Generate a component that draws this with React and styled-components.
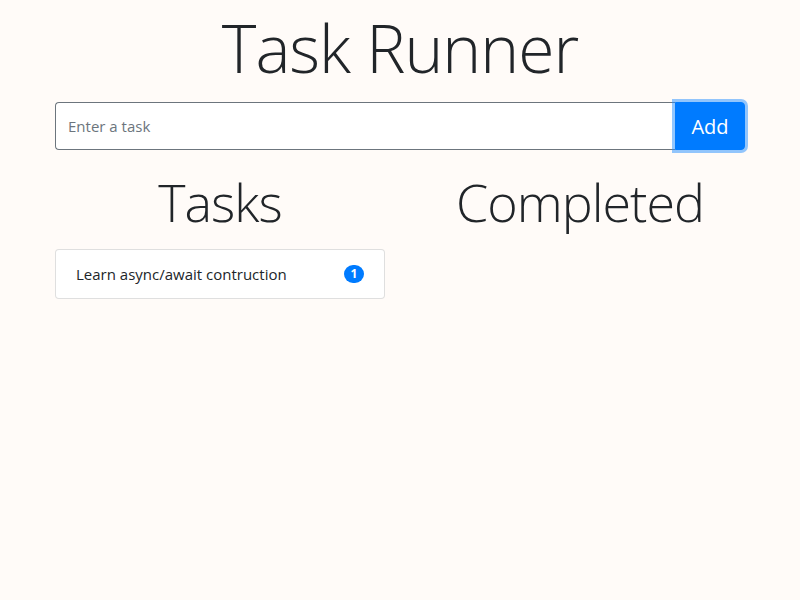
import React, { useState } from 'react'
import styled, { createGlobalStyle } from 'styled-components'

const Global = createGlobalStyle`
  body {
    margin: 0;
    background: #fffbf8;
    font-family: "Open Sans", "Noto Sans", sans-serif;
    color: #212529;
  }
`

const Container = styled.div`
  width: 690px;
  margin: 0 auto;
  padding: 0 15px;
`

const Title = styled.h1`
  margin: 0;
  padding-top: 8px;
  text-align: center;
  font-size: 66px;
  font-weight: 300;
  line-height: 1.2;
  letter-spacing: -1px;
`

const InputGroup = styled.form`
  display: flex;
  margin-top: 15px;
  height: 48px;
`

const TaskInput = styled.input`
  flex: 1;
  min-width: 0;
  border: 1px solid #6c757d;
  border-right: none;
  border-radius: 4px 0 0 4px;
  padding: 0 12px;
  font-family: inherit;
  font-size: 15px;
  background: #fff;
  color: #495057;
  outline: none;
  &::placeholder { color: #6c757d; }
`

const AddButton = styled.button`
  width: 70px;
  border: 1px solid #007bff;
  border-radius: 0 4px 4px 0;
  background: #007bff;
  color: #fff;
  font-family: inherit;
  font-size: 20px;
  box-shadow: 0 0 0 3px rgba(38, 143, 255, 0.5);
  position: relative;
`

const Row = styled.div`
  display: grid;
  grid-template-columns: 1fr 1fr;
  column-gap: 30px;
  margin-top: 21px;
`

const Column = styled.div``

const Heading = styled.h2`
  margin: 0 0 15px;
  text-align: center;
  font-size: 52px;
  font-weight: 300;
  line-height: 1.2;
  letter-spacing: -1px;
`

const List = styled.ul`
  margin: 0;
  padding: 0;
  list-style: none;
`

const Item = styled.li`
  display: flex;
  align-items: center;
  justify-content: space-between;
  padding: 12px 20px;
  background: #fff;
  border: 1px solid rgba(0, 0, 0, 0.125);
  border-radius: 4px;
  font-size: 15px;
  line-height: 24px;
`

const Badge = styled.span`
  display: inline-block;
  min-width: 20px;
  padding: 2px 6px;
  box-sizing: border-box;
  border-radius: 10px;
  background: #007bff;
  color: #fff;
  font-size: 12px;
  font-weight: 700;
  line-height: 14px;
  text-align: center;
`

export default function App() {
  const [tasks] = useState([{ name: 'Learn async/await contruction', count: 1 }])
  const [completed] = useState([])
  return (
    <>
      <Global />
      <Container>
        <Title>Task Runner</Title>
        <InputGroup onSubmit={e => e.preventDefault()}>
          <TaskInput placeholder="Enter a task" />
          <AddButton type="submit">Add</AddButton>
        </InputGroup>
        <Row>
          <Column>
            <Heading>Tasks</Heading>
            <List>
              {tasks.map(t => (
                <Item key={t.name}>
                  {t.name}
                  <Badge>{t.count}</Badge>
                </Item>
              ))}
            </List>
          </Column>
          <Column>
            <Heading>Completed</Heading>
            <List>
              {completed.map(t => (
                <Item key={t.name}>{t.name}</Item>
              ))}
            </List>
          </Column>
        </Row>
      </Container>
    </>
  )
}
